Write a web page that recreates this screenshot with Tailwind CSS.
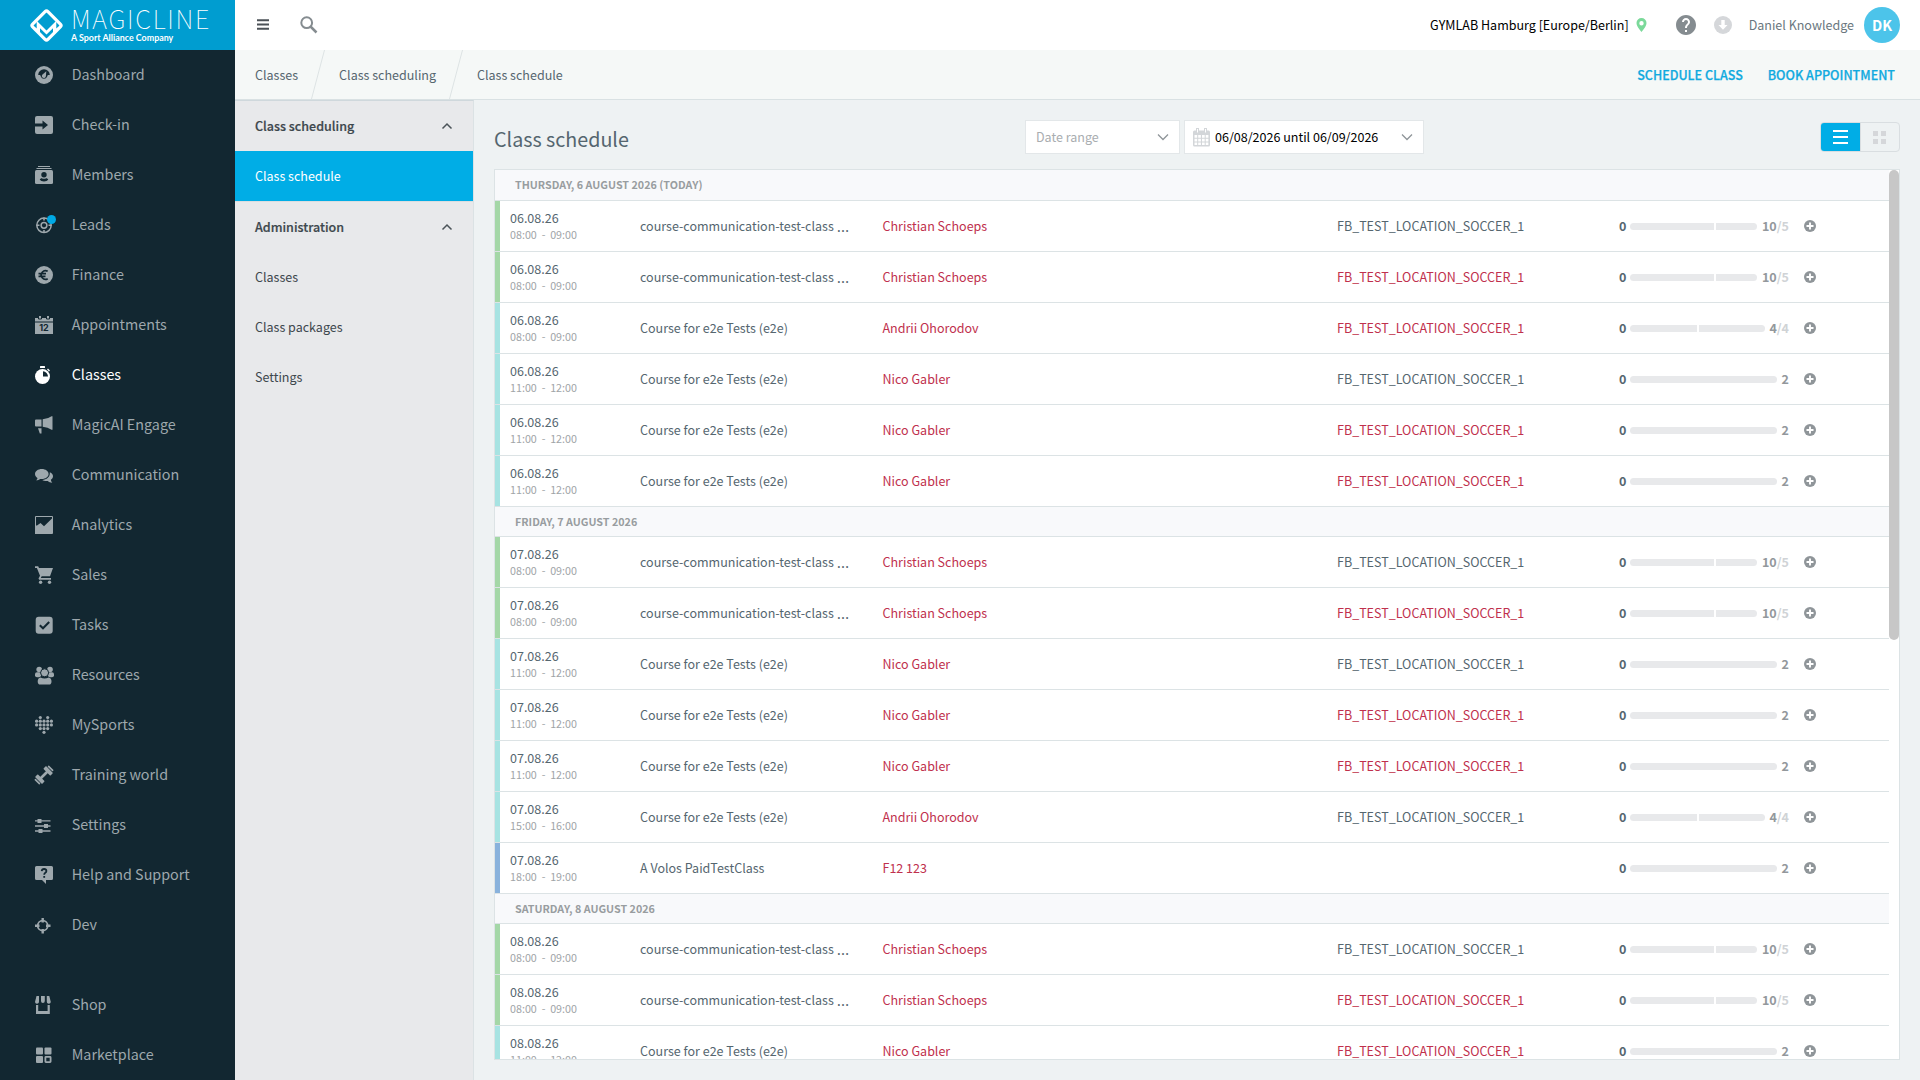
<!DOCTYPE html>
<html lang="en">
<head>
<meta charset="utf-8">
<title>Magicline – Class schedule</title>
<script src="https://cdn.jsdelivr.net/npm/@tailwindcss/browser@4"></script>
</head>
<body class="w-[1920px] h-[1080px] overflow-hidden flex bg-[#eef2f3] font-['Noto_Sans_CJK_SC',sans-serif] text-[12.53px] leading-5 text-[#55666f]">

<!-- Main navigation -->
<aside class="w-[235px] h-full shrink-0 flex flex-col bg-[#122731] text-[#9ea8ad] text-[14.33px]">
  <div class="h-[50px] shrink-0 bg-[#009dd0] flex pl-[29px] pt-2 text-white">
    <svg class="w-[35px] h-[35px] shrink-0" viewBox="0 0 35 35"><rect x="6.700" y="6.700" width="21.600" height="21.600" rx="2" transform="rotate(45 17.500 17.500)" fill="none" stroke="#fff" stroke-width="3.200"/><path d="M7.700 12.700L17.500 22.500L27.300 12.700V20.500L29.500 19L24 25V20.300L17.500 26.500L11 20.300V25L5.500 19L7.700 20.500Z" fill="#fff"/></svg>
    <div class="flex flex-col pl-[7px]">
      <div class="h-[23px] leading-[19px] text-[25.500px] font-thin tracking-[1.700px] whitespace-nowrap">MAGICLINE</div>
      <div class="h-[13px] leading-[13px] font-['Lato'] font-bold text-[8.900px] whitespace-nowrap">A Sport Alliance Company</div>
    </div>
  </div>
  <nav id="nav" class="flex-1 flex flex-col"></nav>
  <nav id="navBottom" class="flex flex-col"></nav>
</aside>

<div class="flex-1 flex flex-col min-w-0">
  <!-- Top bar -->
  <header class="h-[50px] shrink-0 bg-white flex items-center pl-[22px] pr-5">
    <svg class="w-3 h-[11px] -mt-px" viewBox="0 0 12 11"><path d="M0 1.200h12M0 5.500h12M0 9.800h12" stroke="#4b5157" stroke-width="1.900"/></svg>
    <svg class="w-[18px] h-[18px] ml-[31px]" viewBox="0 0 18 18" fill="none" stroke="#858c90"><circle cx="6.700" cy="6.700" r="5.400" stroke-width="2"/><path d="M10.500 10.500l6 6" stroke-width="2.500"/></svg>
    <div class="ml-auto text-black whitespace-nowrap">GYMLAB Hamburg [Europe/Berlin]</div>
    <svg class="w-[11px] h-[14px] ml-[7px]" viewBox="0 0 11 14"><path fill="#7bd99a" fill-rule="evenodd" d="M5.500 0A5 5 0 0 0 .500 5C.500 8.500 5.500 14 5.500 14S10.500 8.500 10.500 5A5 5 0 0 0 5.500 0ZM5.500 3a2.200 2.200 0 1 1 0 4.400a2.200 2.200 0 0 1 0-4.400Z"/></svg>
    <svg class="w-5 h-5 ml-[29px]" viewBox="2 2 20 20" fill="#858c90"><path d="M12 2C6.480 2 2 6.480 2 12s4.480 10 10 10 10-4.480 10-10S17.520 2 12 2zm1 17h-2v-2h2v2zm2.070-7.750l-.9.920C13.450 12.900 13 13.500 13 15h-2v-.5c0-1.100.450-2.100 1.170-2.830l1.240-1.260c.370-.360.590-.860.590-1.410 0-1.100-.9-2-2-2s-2 .9-2 2H8c0-2.210 1.790-4 4-4s4 1.790 4 4c0 .880-.360 1.680-.930 2.250z"/></svg>
    <svg class="w-[18px] h-[18px] ml-[18px]" viewBox="0 0 18 18"><circle cx="9" cy="9" r="9" fill="#d5d7da"/><path d="M7.300 4h3.400v5h2.800L9 13.700L4.500 9h2.800z" fill="#fff"/></svg>
    <div class="ml-[17px] text-[#6a777e] whitespace-nowrap">Daniel Knowledge</div>
    <div class="ml-[10px] size-9 rounded-full bg-[#4cc4ea] text-white font-bold text-[14.300px] flex items-center justify-center">DK</div>
  </header>

  <!-- Breadcrumbs -->
  <div class="h-[50px] shrink-0 bg-[#f5f8f7] border-b border-[#d9e1e3] flex items-center pl-5 pr-[25px] whitespace-nowrap">
    <span>Classes</span>
    <svg class="w-[14px] h-[49px] ml-[13px]" viewBox="0 0 14 49"><path d="M13.500 0L.500 49" stroke="#dde3e4"/></svg>
    <span class="ml-[14px]">Class scheduling</span>
    <svg class="w-[14px] h-[49px] ml-[13px]" viewBox="0 0 14 49"><path d="M13.500 0L.500 49" stroke="#dde3e4"/></svg>
    <span class="ml-[14px]">Class schedule</span>
    <span class="ml-auto text-[#11aadf] font-medium [-webkit-text-stroke:0.25px]">SCHEDULE CLASS</span>
    <span class="ml-[25px] text-[#11aadf] font-medium [-webkit-text-stroke:0.25px]">BOOK APPOINTMENT</span>
  </div>

  <div class="flex-1 flex min-h-0">
    <!-- Section navigation -->
    <aside class="w-[239px] shrink-0 bg-[#e8e9eb] border-r border-r-[#dbe2e4] border-t border-t-[#cfd8dc] flex flex-col text-[#3d474d]">
      <div class="h-[50px] flex items-center justify-between pl-5 pr-5 font-medium [-webkit-text-stroke:0.2px]"><span>Class scheduling</span><svg class="w-3 h-2" viewBox="0 0 12 8"><path d="M1.500 6.500L6 2l4.500 4.500" fill="none" stroke="#4b5459" stroke-width="1.500"/></svg></div>
      <div class="h-[50px] flex items-center pl-5 bg-[#00ade6] text-white">Class schedule</div>
      <div class="h-[51px] flex items-center justify-between pl-5 pr-5 font-medium [-webkit-text-stroke:0.2px] border-t border-[#dbdee0]"><span>Administration</span><svg class="w-3 h-2" viewBox="0 0 12 8"><path d="M1.500 6.500L6 2l4.500 4.500" fill="none" stroke="#4b5459" stroke-width="1.500"/></svg></div>
      <div class="h-[50px] flex items-center pl-5">Classes</div>
      <div class="h-[50px] flex items-center pl-5">Class packages</div>
      <div class="h-[50px] flex items-center pl-5">Settings</div>
    </aside>

    <main class="flex-1 min-w-0 flex flex-col pl-5 pr-5 pb-5">
      <div class="h-[69px] shrink-0 flex items-start pt-5">
        <h1 class="w-[531px] text-[19.700px] leading-[38px] whitespace-nowrap">Class schedule</h1>
        <div class="w-[155px] h-[34px] bg-white border border-[#e3e7e9] flex items-center justify-between pl-[10px] pr-[10px] text-[#a9adb0]"><span>Date range</span><svg class="w-3 h-2" viewBox="0 0 12 8"><path d="M1 1.500L6 6.500l5-5" fill="none" stroke="#8f9599" stroke-width="1.300"/></svg></div>
        <div class="ml-1 w-[240px] h-[34px] bg-white border border-[#e3e7e9] flex items-center pl-2 pr-[10px] text-black">
          <svg class="w-[17px] h-[19px]" viewBox="0 0 17 19"><rect y="2.500" width="17" height="16" rx="1.500" fill="#d3d6d9"/><path d="M3 0h3v5H3zM11 0h3v5h-3z" fill="#d3d6d9"/><path d="M4.500 1v3.500M12.500 1v3.500" stroke="#fff"/><path fill="#fff" d="M1.500 7h2.700v2.700H1.500zM5.200 7h2.700v2.700H5.200zM9 7h2.700v2.700H9zM12.700 7h2.700v2.700h-2.700zM1.500 10.700h2.700v2.700H1.500zM5.200 10.700h2.700v2.700H5.200zM9 10.700h2.700v2.700H9zM12.700 10.700h2.700v2.700h-2.700zM1.500 14.400h2.700v2.700H1.500zM5.200 14.400h2.700v2.700H5.200zM9 14.400h2.700v2.700H9zM12.700 14.400h2.700v2.700h-2.700z"/></svg>
          <span class="ml-[5px] whitespace-nowrap">06/08/2026 until 06/09/2026</span>
          <svg class="w-3 h-2 ml-auto" viewBox="0 0 12 8"><path d="M1 1.500L6 6.500l5-5" fill="none" stroke="#8f9599" stroke-width="1.300"/></svg>
        </div>
        <div class="ml-auto mt-[2px] w-[80px] h-[30px] rounded-[4px] border border-[#d9dee1] flex overflow-hidden">
          <div class="w-[39px] bg-[#00ade6] flex items-center justify-center"><svg class="w-[15px] h-[14px]" viewBox="0 0 15 14"><path d="M0 1h15M0 7h15M0 13h15" stroke="#fff" stroke-width="2"/></svg></div>
          <div class="flex-1 border-l border-[#d9dee1] flex items-center justify-center pr-[2px]"><svg class="w-[13px] h-[13px]" viewBox="0 0 13 13" fill="#d5d7da"><path d="M0 0h5v5H0zM8 0h5v5H8zM0 8h5v5H0zM8 8h5v5H8z"/></svg></div>
        </div>
      </div>

      <!-- Schedule list -->
      <section class="flex-1 min-h-0 bg-white border border-[#dce3e5] flex overflow-hidden">
        <div id="list" class="flex-1 min-w-0"></div>
        <div class="w-[10px] shrink-0"><div class="h-[470px] rounded-[5px] bg-[#c7c7c7]"></div></div>
      </section>
    </main>
  </div>
</div>

<script>
const D = '#122731';
const nav = [
  ['Dashboard', `<circle cx="9" cy="9" r="9"/><path d="M9 3.200A5.800 5.800 0 0 0 3.200 9H5a2.200 2.200 0 0 1 .8 1.600a3.400 3.400 0 0 0 6.400 0A2.200 2.200 0 0 1 13 9h1.800A5.800 5.800 0 0 0 9 3.200Z" fill="${D}"/><path d="M11.300 5.200L10.900 10.300A2 2 0 1 1 7.300 8.700Z"/>`],
  ['Check-in', `<rect width="18" height="18" rx="2"/><path d="M0 7.500H7.500V4.500L13 9L7.500 13.500V10.500H0Z" fill="${D}"/>`],
  ['Members', `<path d="M3 0h12v1H3zM1.500 2h15v1h-15z"/><rect y="4" width="18" height="14" rx="1.500"/><circle cx="9" cy="8.800" r="2.700" fill="${D}"/><path d="M4.800 13.700C5 12.700 6 12.200 6.800 12.200Q9 13.200 11.200 12.200C12 12.200 13 12.700 13.200 13.700Q12 15.500 9 15.500T4.800 13.700Z" fill="${D}"/>`],
  ['Leads', `<g fill="none" stroke="#9ea8ad"><circle cx="9" cy="9.300" r="7.200" stroke-width="1.500"/><circle cx="9" cy="9.300" r="2.900" stroke-width="1.500"/><path d="M9 1.500v3M9 14v3M1.500 9.300h3M13.500 9.300h3" stroke-width="1.600"/></g><circle cx="16.500" cy="3.500" r="4.500" fill="#00a9e5"/>`],
  ['Finance', `<circle cx="9" cy="9" r="9"/><path d="M12.700 5.300A4.300 4.300 0 1 0 12.700 12.700M3.500 7.700H11M3.500 10.300H10.500" fill="none" stroke="${D}" stroke-width="1.700"/>`],
  ['Appointments', `<path d="M0 2h18v16H0zM3.500 0h3v3h-3zM11.500 0h3v3h-3z"/><path d="M3.500 0v3h3v-3M11.500 0v3h3v-3M0 6h18" fill="none" stroke="${D}" stroke-width="1"/><text x="9" y="15.300" text-anchor="middle" fill="${D}" font-family="Inter" font-size="9" font-weight="700">12</text>`],
  ['Classes', `<circle cx="7.500" cy="10.500" r="7.500"/><rect x="5" y="0" width="5" height="2" rx=".5"/><path d="M12.500 3l2 2" stroke="#fff" stroke-width="1.200"/><path d="M8 5.300V10.500H13A5.200 5.200 0 0 0 8 5.300Z" fill="${D}"/>`],
  ['MagicAI Engage', `<path d="M1 3.500H6.500V10.500H1a1 1 0 0 1-1-1v-5a1 1 0 0 1 1-1ZM7.700 3.300Q13 3 16.500 0.300H17.500V13.700H16.500Q13 11 7.700 10.700ZM3 12.200H6.500V17.500H4.800Z"/>`],
  ['Communication', `<path d="M6.800 3C3 3 0 5.200 0 8C0 9.600 1 11 2.500 11.900C2.400 13 1.500 13.700 1 14.200C2.800 14.200 4.300 13.600 5.200 12.900Q6 13 6.800 13C10.600 13 13.600 10.800 13.600 8S10.600 3 6.800 3Z"/><path d="M14.800 6.200C17 7 18 8.500 18 10.200C18 11.700 17.200 13 15.900 13.700C16 15 16.700 15.900 17.300 16.700C15.300 16.600 13.900 15.800 12.800 14.900C10.500 15.200 8.600 14.800 7.300 13.900C11.500 13.700 15.300 11 14.800 6.200Z"/>`],
  ['Analytics', `<path d="M.500.500h17v17H.500z" fill="none" stroke="#9ea8ad"/><path d="M0 9.500L2 9.500L5.500 7L9 10.300L17 2.500V18H0z"/>`],
  ['Sales', `<path d="M0 .200H3.200L4 2H18L15 10.200H6.700L5.800 12H16V13.700H4.200L3.500 12.500L5 9.700L1.900 2H0Z"/><circle cx="5.600" cy="16.300" r="1.700"/><circle cx="14.500" cy="16.300" r="1.700"/>`],
  ['Tasks', `<rect x=".7" y=".7" width="17" height="17" rx="3"/><path d="M4.800 9.200L8 12.300L14.200 6" fill="none" stroke="${D}" stroke-width="2"/>`],
  ['Resources', `<circle cx="4.200" cy="3.500" r="2.800"/><circle cx="15" cy="3.500" r="2.800"/><rect x="0" y="6.200" width="6" height="5" rx="2"/><rect x="13" y="6.200" width="6" height="5" rx="2"/><circle cx="9.600" cy="6.800" r="4" stroke="${D}"/><path d="M5.500 11.500Q9.600 13.500 13.700 11.500Q16.500 12 16.500 15.500Q16.500 18.600 14 18.600H5.200Q2.700 18.600 2.700 15.500Q2.700 12 5.500 11.500Z"/>`],
  ['MySports', [[5.3,1.5],[12.7,1.5],...[1.6,5.3,9,12.7,16.4].flatMap(x=>[[x,5.200],[x,8.900]]),[5.300,12.600],[9,12.600],[12.700,12.600],[9,16.300]].map(([x,y])=>`<circle cx="${x}" cy="${y}" r="1.600"/>`).join('')],
  ['Training world', `<g transform="rotate(-45 9 9)"><rect x="4" y="7.700" width="10" height="2.600"/><rect x="1.200" y="4" width="3.900" height="10" rx=".8"/><rect x="12.900" y="4" width="3.900" height="10" rx=".8"/><rect x="-1.200" y="5.500" width="1.700" height="7" rx=".6"/><rect x="17.500" y="5.500" width="1.700" height="7" rx=".6"/></g>`],
  ['Settings', `<path d="M0 4.200h15.500v1.400H0zM0 9.300h15.500v1.400H0zM0 14.300h15.500v1.400H0z"/><path d="M2.500 3h4v4h-4zM9 8h4v4H9zM3.500 13h4v4h-4z"/>`],
  ['Help and Support', `<path d="M1.500 0h15A1.500 1.500 0 0 1 18 1.500v11A1.500 1.500 0 0 1 16.500 14H11v4L7 14H1.500A1.500 1.500 0 0 1 0 12.500v-11A1.500 1.500 0 0 1 1.500 0Z"/><path d="M6.700 5.200Q6.900 3 9.100 3T11.400 5Q11.400 6.100 10.300 6.800T9.200 8.700" fill="none" stroke="${D}" stroke-width="1.800"/><path d="M8.300 10h1.800v1.800H8.300z" fill="${D}"/>`],
  ['Dev', `<circle cx="7.700" cy="9.700" r="5" fill="none" stroke="#9ea8ad" stroke-width="1.800"/><path d="M6.500 2h2.400v4.500H6.500zM6.500 13h2.400v4.500H6.500zM0 8.500h4.500v2.400H0zM11 8.500h4.500v2.400H11z"/>`],
];
const bottom = [
  ['Shop', `<path d="M1.500 0H4V5.500A1.800 1.800 0 0 1 0 6ZM6 0H9.800V5A1.900 1.900 0 0 1 6 5ZM11.800 0H14.300L15.800 6A1.800 1.800 0 0 1 11.800 5.500ZM1 9h2.200v6h9.400V9h2.200v9H1Z"/>`],
  ['Marketplace', `<rect x="1" y="1.500" width="7" height="7" rx="1"/><rect x="9.500" y="1.500" width="7" height="7" rx="1"/><rect x="1" y="10" width="7" height="7" rx="1"/><rect x="10.400" y="10.900" width="5.200" height="5.200" rx=".5" fill="none" stroke="#9ea8ad" stroke-width="1.800"/>`],
];
const item = ([label, icon]) => `<a class="h-[50px] flex items-center pl-[35px] ${label === 'Classes' ? 'text-white' : ''}"><svg class="w-[18px] h-[18px] shrink-0 overflow-visible" viewBox="0 0 18 18" fill="currentColor">${icon}</svg><span class="ml-[18.700px] pb-[2px] whitespace-nowrap">${label}</span></a>`;
document.getElementById('nav').innerHTML = nav.map(item).join('');
document.getElementById('navBottom').innerHTML = bottom.map(item).join('');

const G = 'bg-[#a4d7a7]', T = 'bg-[#a7e3e2]', B = 'bg-[#89b2dc]';
const comm = red => [G, '08:00', '09:00', 'comm', 'Christian Schoeps', red, 10, 5];
const nico = red => [T, '11:00', '12:00', 'Course for e2e Tests (e2e)', 'Nico Gabler', red, 2, 0];
const days = [
  ['THURSDAY, 6 AUGUST 2026 (TODAY)', '06.08.26', [comm(0), comm(1), [T, '08:00', '09:00', 'Course for e2e Tests (e2e)', 'Andrii Ohorodov', 1, 4, 4], nico(0), nico(1), nico(1)]],
  ['FRIDAY, 7 AUGUST 2026', '07.08.26', [comm(0), comm(1), nico(0), nico(1), nico(1), [T, '15:00', '16:00', 'Course for e2e Tests (e2e)', 'Andrii Ohorodov', 0, 4, 4], [B, '18:00', '19:00', 'A Volos PaidTestClass', 'F12 123', -1, 2, 0]]],
  ['SATURDAY, 8 AUGUST 2026', '08.08.26', [comm(0), comm(1), nico(1)]],
];
const row = date => ([c, from, to, title, trainer, red, max, wait]) => `
<div class="h-[51px] flex border-b border-[#dce3e5] whitespace-nowrap">
  <div class="w-[5px] ${c}"></div>
  <div class="w-[140px] pl-[10px] pt-[7px]">
    <div class="h-5 leading-5">${date}</div>
    <div class="h-[14px] leading-[14px] text-[10.740px] text-[#a0a4a7] flex gap-[4.800px]"><span>${from}</span><span>-</span><span>${to}</span></div>
  </div>
  <div class="w-[242.500px] flex items-center">${title === 'comm' ? `course-communication-test-class<span class="ml-[3px] font-['Open_Sans'] text-[16px]">…</span>` : title}</div>
  <div class="w-[454.500px] flex items-center text-[#c0304d]">${trainer}</div>
  <div class="w-[282px] flex items-center ${red === 1 ? 'text-[#c0304d]' : ''}">${red < 0 ? '' : 'FB_TEST_LOCATION_SOCCER_1'}</div>
  <div class="w-[170px] flex items-center font-bold">
    <span class="w-[11.300px]">0</span>
    <div class="flex-1 h-[7px] flex gap-[2px] rounded-full overflow-hidden">
      ${wait ? `<div class="h-full bg-[#e8e9eb]" style="flex:${max}"></div><div class="h-full bg-[#e8e9eb]" style="flex:${wait}"></div>` : `<div class="h-full flex-1 bg-[#e8e9eb]"></div>`}
    </div>
    <span class="ml-[4.500px] text-[#93989c]">${max}${wait ? `<span class="text-[#d0d3d6]">/${wait}</span>` : ''}</span>
  </div>
  <div class="ml-[15px] flex items-center"><svg class="w-3 h-3" viewBox="0 0 12 12"><circle cx="6" cy="6" r="6" fill="#8f9599"/><path d="M6 2.500v7M2.500 6h7" stroke="#fff" stroke-width="1.900"/></svg></div>
</div>`;
document.getElementById('list').innerHTML = days.map(([name, date, rows], i) =>
  `<div class="${i ? 'h-[30px]' : 'h-[31px]'} flex items-center pl-5 bg-[#f8f9fb] border-b border-[#dce3e5] font-bold text-[10.740px] text-[#989da0]">${name}</div>` + rows.map(row(date)).join('')).join('');
</script>
</body>
</html>
